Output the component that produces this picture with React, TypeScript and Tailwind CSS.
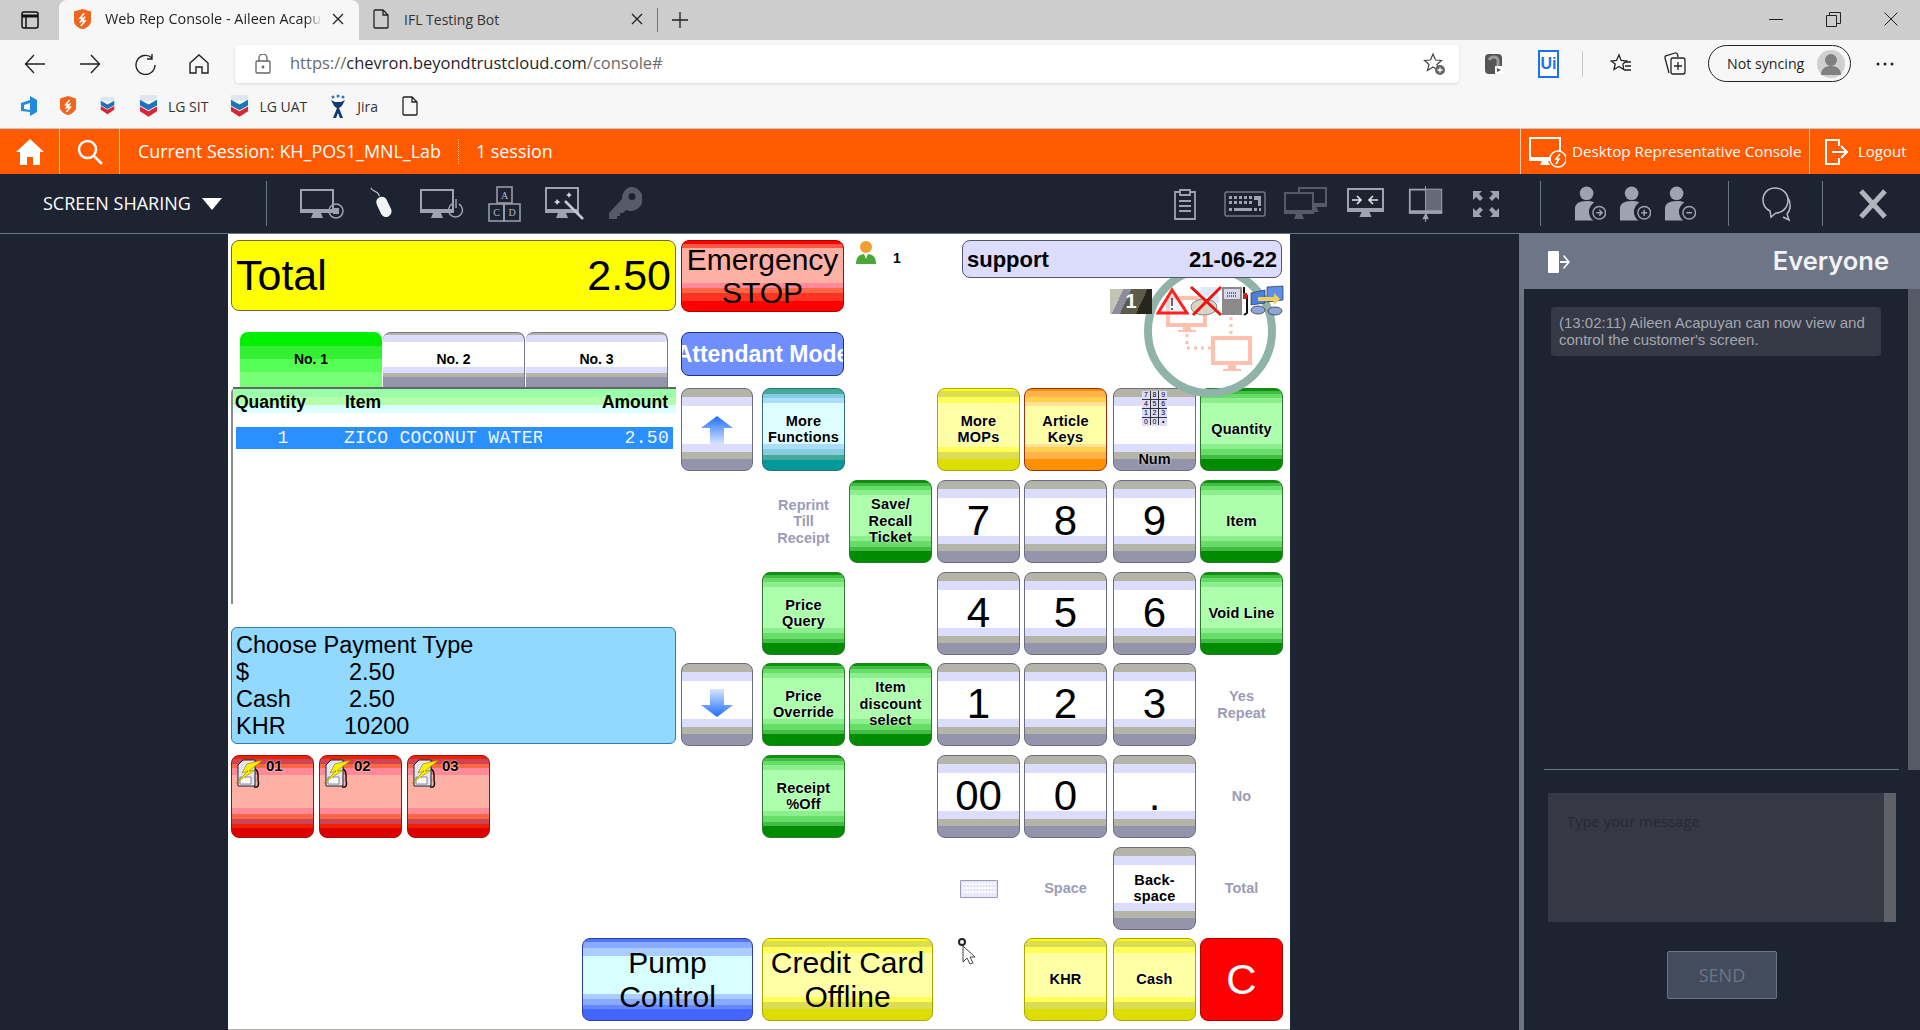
import type { ReactNode } from "react";

const sans = "font-['Liberation_Sans',Arial,sans-serif]";

// stripe skins of the POS keys, all hard stops
const skins = {
  gray: "border-[#6c6c80] bg-[linear-gradient(#b4b4a8_0_8px,#dcdcfc_8px_17px,#fff_17px_55px,#dcdcfc_55px_63px,#b4b4a8_63px_70px,#9494ac_70px)]",
  green: "border-[#2c7a2c] bg-[linear-gradient(#009900_0_2px,#44bb44_2px_5px,#66dd66_5px_9px,#8cee8c_9px_14px,#adffad_14px_55px,#8cee8c_55px_60px,#66dd66_60px_66px,#44bb44_66px_70px,#008c00_70px)]",
  orange: "border-[#99330f] bg-[linear-gradient(#ff9000_0_2px,#ffb24c_2px_8px,#ffd04c_8px_13px,#ffe099_13px_17px,#ffffa5_17px_55px,#ffe099_55px_58px,#ffd04c_58px_63px,#ffb24c_63px_70px,#ff9000_70px)]",
  yellow: "border-[#a8a800] bg-[linear-gradient(#ffff00_0_2px,#dddd55_2px_8px,#ffff55_8px_14px,#ffffa5_14px_58px,#ffff55_58px_63px,#dddd55_63px_70px,#dddd00_70px)]",
  teal: "border-[#2f6f78] bg-[linear-gradient(#44aa99_0_5px,#88ccdd_5px_9px,#aaddff_9px_14px,#ddffff_14px_55px,#aaddff_55px_60px,#88ccdd_60px_66px,#44aa99_66px_71px,#009999_71px)]",
  red: "border-[#b00000] bg-[#ff0000]",
  pump: "border-[#a01010] bg-[linear-gradient(#ee2200_0_3px,#cc4455_3px_8px,#ff6644_8px_12px,#ff8899_12px_19px,#ffb0a5_19px_52px,#ff8899_52px_58px,#ff6644_58px_63px,#cc4455_63px_68px,#ee2200_68px_72px,#dd0000_72px)]",
  blue: "border-[#2b3f9c] bg-[linear-gradient(#5577ff_0_3px,#88aaff_3px_9px,#aaccff_9px_17px,#d8ffff_17px_55px,#aaccff_55px_60px,#88aaff_60px_66px,#6688ff_66px_70px,#4466ff_70px)]",
};

function Key({ skin, pos, w = "w-[83px]", children, text = "label" }: { skin: keyof typeof skins; pos: string; w?: string; children?: ReactNode; text?: string }) {
  const size =
    text === "digit"
      ? "text-[42px] leading-none font-normal pb-[2px]"
      : text === "big"
        ? "text-[30px] leading-[34px] font-normal"
        : "text-[14.5px] leading-[16.5px] font-bold tracking-[0.2px] pb-[1px] [text-shadow:0_0_2px_#fff]";
  return (
    <div className={`${pos} ${w} h-[83px] ${skins[skin]} ${size} ${sans} border rounded-[8px] flex flex-col items-center justify-center text-center text-black overflow-hidden`}>
      {children}
    </div>
  );
}

function Ghost({ pos, children }: { pos: string; children: ReactNode }) {
  return (
    <div className={`${pos} w-[83px] h-[83px] ${sans} flex flex-col items-center justify-center text-center text-[14.5px] leading-[16.5px] font-bold text-[#9c9cb8]`}>
      {children}
    </div>
  );
}

function ArrowKey({ pos, down }: { pos: string; down?: boolean }) {
  return (
    <Key skin="gray" pos={pos} w="w-[72px]">
      <svg width="32" height="30" viewBox="0 0 32 30" className={down ? "rotate-180" : ""}>
        <defs>
          <linearGradient id={down ? "ad" : "au"} x1="0" y1="0" x2="0" y2="1">
            <stop offset="0" stopColor="#1f6dff" />
            <stop offset="1" stopColor="#d6e6ff" />
          </linearGradient>
        </defs>
        <path d="M16 2 32 14H23V30H9V14H0Z" fill={`url(#${down ? "ad" : "au"})`} />
      </svg>
    </Key>
  );
}

function PumpIcon() {
  return (
    <svg width="29" height="31" viewBox="0 0 29 31" className="shrink-0">
      <path d="M3 7 8 2h12v26H3Z" fill="#e4e4f4" stroke="#222" />
      <path d="M5 19h11v7H5Z" fill="#fff" stroke="#8888a0" />
      <path d="M20 11c4 2 3 6 3 10s2 6-1 8h-3" fill="none" stroke="#111" strokeWidth="1.5" />
      <path d="M28 2 12 6 7 15l6-2L1 25l19-13-6 1Z" fill="#ffee00" stroke="#8a7a00" strokeWidth=".6" />
    </svg>
  );
}

function PumpTile({ label }: { label: string }) {
  return (
    <div className={`w-[83px] h-[83px] ${skins.pump} border rounded-[8px] flex items-start pl-[3px] pt-[2px] gap-[2px]`}>
      <PumpIcon />
      <span className={`${sans} text-[15px] font-bold text-black leading-[16px] [text-shadow:0_0_2px_#fff]`}>{label}</span>
    </div>
  );
}

function Tab({ label, active }: { label: string; active?: boolean }) {
  return (
    <div
      className={`${sans} w-[142px] h-[55px] rounded-t-[8px] flex items-center justify-center pb-[1px] text-[14px] font-bold text-black ${
        active
          ? "bg-[linear-gradient(#00ee00_0_14px,#33f033_14px_27px,#55ff55_27px_40px,#77ff77_40px)]"
          : "border-t border-r border-[#77778a] bg-[linear-gradient(#b4b4a8_0_2px,#dcdcfc_2px_9px,#fff_9px_34px,#dcdcfc_34px_40px,#b4b4a8_40px_44px,#9494ac_44px)]"
      }`}
    >
      {label}
    </div>
  );
}

function LeftPanel() {
  return (
    <div className="col-start-1 row-start-1 row-span-7 w-[445px] flex flex-col">
      <div className={`${sans} h-[71px] shrink-0 rounded-[8px] border border-[#6b6b3c] bg-[#ffff00] flex items-center justify-between px-[4px] text-[43px] text-black`}>
        <span>Total</span>
        <span>2.50</span>
      </div>
      <div className="mt-[21px] pl-[9px] flex gap-[1px] shrink-0">
        <Tab label="No. 1" active />
        <Tab label="No. 2" />
        <Tab label="No. 3" />
      </div>
      <div className={`${sans} h-[217px] shrink-0 border-l-2 border-[#8c8c8c] rounded-tl-[6px] flex flex-col`}>
        <div className="h-[26px] border-t-2 border-[#666] flex items-center justify-between pl-[2px] pr-[8px] pt-[3px] bg-[linear-gradient(#99ffaa_0_8px,#b5ffaa_8px_16px,#ddffff_16px)] text-[17.5px] leading-none font-bold text-black">
          <span className="w-[110px] shrink-0">Quantity</span>
          <span className="flex-1">Item</span>
          <span>Amount</span>
        </div>
        <div className="mt-[14px] mx-[3px] h-[22px] bg-[#2b90ff] flex items-center text-[#eef5ff] font-['Liberation_Mono',monospace] text-[18px] tracking-[0.3px]">
          <span className="w-[108px] text-center pr-[14px]">1</span>
          <span className="w-[198px] overflow-hidden whitespace-nowrap">ZICO COCONUT WATER</span>
          <span className="flex-1 text-right pr-[4px]">2.50</span>
        </div>
      </div>
      <div className={`${sans} mt-[23px] h-[117px] shrink-0 rounded-[6px] border border-[#2f7f9f] bg-[#91d9ff] pl-[4px] pt-[4px] text-[23.5px] leading-[27px] text-black`}>
        <div>Choose Payment Type</div>
        <div className="grid grid-cols-[113px_1fr]">
          <span>$</span>
          <span>2.50</span>
          <span>Cash</span>
          <span>2.50</span>
          <span>KHR</span>
          <span className="ml-[-5px]">10200</span>
        </div>
      </div>
      <div className="mt-[11px] flex gap-[5px] shrink-0">
        <PumpTile label="01" />
        <PumpTile label="02" />
        <PumpTile label="03" />
      </div>
    </div>
  );
}

function StatusIcons() {
  return (
    <div className="relative z-10 flex justify-end items-center h-[30px] mt-[8px] mr-[-1px]">
      <div className={`${sans} w-[42px] h-[25px] mr-[4px] flex items-center justify-center text-[20px] font-bold text-white bg-[linear-gradient(115deg,#c4c4b4_0_25%,#8c8c9c_25%_40%,#5c5c48_40%_70%,#26261c_70%)]`}>
        1
      </div>
      <svg width="33" height="28" viewBox="0 0 33 28">
        <path d="M16 3 31 26H2Z" fill="#dfe6f6" fillOpacity=".5" stroke="#ff2020" strokeWidth="3" />
        <path d="M15 11h2v8h-2Zm0 10h2v2h-2Z" fill="#666" />
      </svg>
      <svg width="33" height="32" viewBox="0 0 33 32">
        <path d="M12 2h16l3 16H8Z" fill="#dfe8fa" />
        <ellipse cx="15" cy="22" rx="13" ry="8" fill="#d6d6c8" stroke="#888" />
        <path d="M2 2 32 30M32 2 4 30" stroke="#f01010" strokeWidth="3" />
      </svg>
      <svg width="28" height="32" viewBox="0 0 28 32">
        <path d="M0 2h20v28H0Z" fill="#8a8a8a" />
        <path d="M2 4h16v10H2Z" fill="#d8d8ec" />
        <path d="M5 8h10M5 11h10" stroke="#444" strokeWidth="1.5" strokeDasharray="1 1" />
        <path d="M22 2v6l3 3v17l-3 2" fill="none" stroke="#111" strokeWidth="2" />
        <path d="M21 8h4v6h-4Z" fill="#cc2222" />
      </svg>
      <svg width="34" height="32" viewBox="0 0 34 32">
        <path d="M1 8 15 5v13L1 20Z" fill="#4a7fe0" stroke="#234" strokeWidth=".7" />
        <path d="M17 2 33 1v14l-16 2Z" fill="#5c90ea" stroke="#234" strokeWidth=".7" />
        <path d="M8 12h16V8l6 6-6 6v-4H8Z" fill="#f0d060" />
        <ellipse cx="8" cy="25" rx="7" ry="4" fill="#8fa6d8" stroke="#224" strokeWidth=".7" />
        <ellipse cx="25" cy="26" rx="7" ry="4" fill="#8fa6d8" stroke="#224" strokeWidth=".7" />
      </svg>
    </div>
  );
}

function TopRight() {
  return (
    <div className="col-start-4 col-span-5 row-start-1 row-span-2 relative">
      <div className="flex items-start relative z-10">
        <svg width="20" height="24" viewBox="0 0 20 24" className="ml-[7px]">
          <circle cx="10" cy="7" r="6" fill="#f0a030" />
          <path d="M0 24c0-8 4-10 10-10s10 2 10 10Z" fill="#4aa838" />
          <path d="M8 14h4l-2 5Z" fill="#fff" />
        </svg>
        <span className={`${sans} ml-[17px] mt-[8px] text-[14px] font-bold text-black`}>1</span>
        <div className={`${sans} ml-auto mr-[1px] w-[320px] h-[38px] rounded-[8px] border border-[#55556a] bg-[#dcdcfc] flex items-center justify-between px-[4px] text-[22px] font-bold text-black`}>
          <span>support</span>
          <span>21-06-22</span>
        </div>
      </div>
      <StatusIcons />
      {/* recording badge that the remote session paints over the screen */}
      <svg width="134" height="134" viewBox="0 0 134 134" className="absolute left-[294px] top-[25px] pointer-events-none">
        <circle cx="67" cy="66" r="62" fill="none" stroke="#8fb3a6" strokeWidth="8" />
        <g fill="#fff" stroke="#ffc0b0" strokeWidth="4">
          <path d="M25 33h37v27H25Z" />
          <path d="M70 73h37v25H70Z" />
        </g>
        <path d="M40 62h8v3h5v2H35v-2h5ZM85 100h8v4h5v2H80v-2h5Z" fill="#ffc0b0" />
        <path d="M44 69v14h24M88 45v26" fill="none" stroke="#ffc0b0" strokeWidth="3" strokeDasharray="3 4" />
      </svg>
    </div>
  );
}

function PosScreen() {
  return (
    <div className="w-[1062px] h-full bg-white border-b border-[#b0b0a8] pl-[3px] pt-[6px]">
      <div className="grid grid-cols-[450px_81px_87px_88px_87px_89px_87px_83px] grid-rows-[92px_56px_92px_92px_91px_92px_92px_91px_83px]">
        <LeftPanel />
        <div className={`${sans} col-start-2 col-span-2 row-start-1 w-[163px] h-[72px] rounded-[8px] border border-[#b00000] flex flex-col items-center justify-center text-[30px] leading-[33px] text-black bg-[linear-gradient(#ff0000_0_3px,#ff5544_3px_7px,#ffb0a5_7px_42px,#ff8899_42px_47px,#ff6644_47px_52px,#ff3322_52px_60px,#ff0000_60px)]`}>
          <span>Emergency</span>
          <span>STOP</span>
        </div>
        <div className={`${sans} col-start-2 col-span-2 row-start-2 w-[163px] h-[44px] rounded-[8px] border border-[#23307a] bg-[#6f8fff] flex items-center justify-center overflow-hidden pt-[1px] text-[23px] font-bold text-white`}>
          <span className="shrink-0 whitespace-nowrap">Attendant Mode</span>
        </div>
        <TopRight />

        <ArrowKey pos="col-start-2 row-start-3" />
        <Key skin="teal" pos="col-start-3 row-start-3">More<br />Functions</Key>
        <Key skin="yellow" pos="col-start-5 row-start-3">More<br />MOPs</Key>
        <Key skin="orange" pos="col-start-6 row-start-3">Article<br />Keys</Key>
        <div className={`col-start-7 row-start-3 w-[83px] h-[83px] ${skins.gray} ${sans} border rounded-[8px] flex flex-col items-center text-[14.5px] font-bold text-black`}>
          <div className="grid grid-cols-3 gap-[1px] bg-[#333] w-[25px] h-[34px] mt-[2px] text-[7px] leading-[8px] text-center font-normal">
            {["7", "8", "9", "4", "5", "6", "1", "2", "3", "0", "0", "•"].map((n, i) => (
              <span key={i} className="bg-[#dcdcfc]">{n}</span>
            ))}
          </div>
          <span className="mt-auto mb-[-1px] [text-shadow:0_0_2px_#fff]">Num</span>
        </div>
        <Key skin="green" pos="col-start-8 row-start-3">Quantity</Key>

        <Ghost pos="col-start-3 row-start-4">Reprint<br />Till<br />Receipt</Ghost>
        <Key skin="green" pos="col-start-4 row-start-4">Save/<br />Recall<br />Ticket</Key>
        <Key skin="gray" text="digit" pos="col-start-5 row-start-4">7</Key>
        <Key skin="gray" text="digit" pos="col-start-6 row-start-4">8</Key>
        <Key skin="gray" text="digit" pos="col-start-7 row-start-4">9</Key>
        <Key skin="green" pos="col-start-8 row-start-4">Item</Key>

        <Key skin="green" pos="col-start-3 row-start-5">Price<br />Query</Key>
        <Key skin="gray" text="digit" pos="col-start-5 row-start-5">4</Key>
        <Key skin="gray" text="digit" pos="col-start-6 row-start-5">5</Key>
        <Key skin="gray" text="digit" pos="col-start-7 row-start-5">6</Key>
        <Key skin="green" pos="col-start-8 row-start-5">Void Line</Key>

        <ArrowKey pos="col-start-2 row-start-6" down />
        <Key skin="green" pos="col-start-3 row-start-6">Price<br />Override</Key>
        <Key skin="green" pos="col-start-4 row-start-6">Item<br />discount<br />select</Key>
        <Key skin="gray" text="digit" pos="col-start-5 row-start-6">1</Key>
        <Key skin="gray" text="digit" pos="col-start-6 row-start-6">2</Key>
        <Key skin="gray" text="digit" pos="col-start-7 row-start-6">3</Key>
        <Ghost pos="col-start-8 row-start-6">Yes<br />Repeat</Ghost>

        <Key skin="green" pos="col-start-3 row-start-7">Receipt<br />%Off</Key>
        <Key skin="gray" text="digit" pos="col-start-5 row-start-7">00</Key>
        <Key skin="gray" text="digit" pos="col-start-6 row-start-7">0</Key>
        <Key skin="gray" text="digit" pos="col-start-7 row-start-7">.</Key>
        <Ghost pos="col-start-8 row-start-7">No</Ghost>

        <Ghost pos="col-start-5 row-start-8">
          <svg width="38" height="18" viewBox="0 0 38 18">
            <path d="M.5.5h37v17H.5Z" fill="#e8e8fa" stroke="#9c9cb8" />
            <path d="M3 4h32M3 8h32M3 12h32" stroke="#fff" strokeWidth="2" strokeDasharray="2 1" />
          </svg>
        </Ghost>
        <Ghost pos="col-start-6 row-start-8">Space</Ghost>
        <Key skin="gray" pos="col-start-7 row-start-8">Back-<br />space</Key>
        <Ghost pos="col-start-8 row-start-8">Total</Ghost>

        <Key skin="blue" text="big" w="w-[171px] ml-[351px]" pos="col-start-1 col-span-2 row-start-9">Pump<br />Control</Key>
        <Key skin="yellow" text="big" w="w-[171px]" pos="col-start-3 col-span-2 row-start-9">Credit Card<br />Offline</Key>
        <div className="col-start-5 row-start-9 relative">
          <svg width="22" height="28" viewBox="0 0 22 28" className="absolute left-[20px] top-0">
            <circle cx="5" cy="4" r="3" fill="#fff" stroke="#222" strokeWidth="2" />
            <path d="M6 8v16l4-4 3 6 3-1-3-6h5Z" fill="#fff" stroke="#444" />
          </svg>
        </div>
        <Key skin="yellow" pos="col-start-6 row-start-9">KHR</Key>
        <Key skin="yellow" pos="col-start-7 row-start-9">Cash</Key>
        <div className={`col-start-8 row-start-9 w-[83px] h-[83px] ${skins.red} ${sans} border rounded-[8px] flex items-center justify-center text-[42px] text-white`}>C</div>
      </div>
    </div>
  );
}

function ChatPanel() {
  return (
    <div className="w-[401px] h-full flex flex-col border-l-[5px] border-[#6d7587] bg-[#1d2331]">
      <div className="h-[55px] shrink-0 bg-[#6d7587] flex items-center justify-between pl-[24px] pr-[31px] ml-[-1px]">
        <svg width="24" height="24" viewBox="0 0 24 24" fill="#fff">
          <path d="M2 1h9a1 1 0 0 1 1 1v20a1 1 0 0 1-1 1H2a1 1 0 0 1-1-1V2a1 1 0 0 1 1-1Z" />
          <path d="M13 11h7l-4-5 1-1 6 7-6 7-1-1 4-5h-7Z" />
        </svg>
        <span className="font-['Inter',sans-serif] text-[25.5px] font-semibold text-[#f2f3f5]">Everyone</span>
      </div>
      <div className="flex-1 flex min-h-0">
        <div className="flex-1 flex flex-col min-w-0">
          <div className="h-[481px] shrink-0 border-b border-[#6d7587] ml-[20px] mr-[9px] pt-[18px]">
            <div className={`${sans} ml-[7px] w-[330px] h-[49px] rounded-[4px] bg-[#363a46] px-[8px] py-[7px] text-[15px] leading-[17px] text-[#a3a7af]`}>
              (13:02:11) Aileen Acapuyan can now view and control the customer's screen.
            </div>
          </div>
          <div className="mt-[23px] ml-[24px] mr-[12px] h-[129px] shrink-0 bg-[#363944] flex">
            <span className="flex-1 pl-[19px] pt-[18px] font-['Open_Sans',sans-serif] text-[14.8px] leading-[20px] text-[#262a36]">Type your message</span>
            <div className="w-[12px] bg-[#5e6168]" />
          </div>
          <div className="mt-[29px] ml-[143px] w-[110px] h-[48px] rounded-[2px] border border-[#6d7587] bg-[#424c5c] flex items-center justify-center font-['Open_Sans',sans-serif] text-[18px] text-[#6d7587]">
            SEND
          </div>
        </div>
        <div className="w-[12px] h-[481px] bg-[#565a66] shrink-0" />
      </div>
    </div>
  );
}

const toolStroke = { fill: "none", stroke: "#9ea3af", strokeWidth: 2 };

function Monitor({ x = 0, y = 0, w = 32, h = 22, color = "#9ea3af" }: { x?: number; y?: number; w?: number; h?: number; color?: string }) {
  return (
    <g>
      <rect x={x + 1} y={y + 1} width={w} height={h} fill="none" stroke={color} strokeWidth="2" />
      <rect x={x} y={y + h - 2} width={w + 2} height="4" fill={color} />
      <path d={`M${x + w / 2 - 3} ${y + h + 2}h8l2 5h-12Z`} fill={color} />
    </g>
  );
}

function Toolbar() {
  return (
    <div className="h-[60px] shrink-0 bg-[#1d2331] border-b border-[#6d7587] flex items-center">
      <div className="w-[266px] h-full flex items-center pl-[43px] shrink-0">
        <span className="font-['Open_Sans',sans-serif] text-[18px] text-white whitespace-nowrap">SCREEN SHARING</span>
        <svg width="20" height="12" viewBox="0 0 20 12" className="ml-[11px]"><path d="M0 0h20L10 12Z" fill="#fff" /></svg>
      </div>
      <div className="w-px h-[45px] bg-[#6d7587]" />
      <div className="flex items-center ml-[33px] gap-[24px]">
        <svg width="44" height="30" viewBox="0 0 44 30">
          <Monitor />
          <circle cx="36" cy="22" r="7" {...toolStroke} strokeWidth="1.5" />
          <rect x="33" y="19" width="6" height="6" fill="#9ea3af" />
        </svg>
        <svg width="28" height="34" viewBox="0 0 28 40">
          <path d="M1 1c2 6 8 2 10 10" fill="none" stroke="#d0d3d9" strokeWidth="1.2" />
          <rect x="10" y="11" width="13" height="25" rx="6.5" transform="rotate(-25 16 24)" fill="#f2f3f5" />
        </svg>
        <svg width="44" height="30" viewBox="0 0 44 30">
          <Monitor />
          <path d="M32 15a7 7 0 1 0 7 0M36 10v9" {...toolStroke} strokeWidth="1.5" />
        </svg>
        <svg width="33" height="36" viewBox="0 0 33 36" fontFamily="Liberation Serif" fontSize="10" fill="#b4b8c2" textAnchor="middle">
          <g fill="none" stroke="#9ea3af" strokeWidth="1.5">
            <rect x="9" y="1" width="15" height="16" />
            <rect x="1" y="18" width="15" height="17" />
            <rect x="16" y="18" width="16" height="17" />
          </g>
          <text x="16.5" y="13">A</text>
          <text x="8.5" y="30">C</text>
          <text x="24" y="30">D</text>
        </svg>
        <svg width="40" height="34" viewBox="0 0 40 34">
          <Monitor h={24} />
          <path d="M20 14 38 32" stroke="#c6c9d0" strokeWidth="2.5" />
          <path d="M12 12l1.500 2 2 1-2 1-1.500 2-1-2-2-1 2-1ZM24 5l1 2 2 1-2 1-1 2-1-2-2-1 2-1Z" fill="#d6d9df" />
        </svg>
        <svg width="33" height="33" viewBox="0 0 33 33" fill="#555b69">
          <path d="M21 0a12 12 0 1 1-4 23l-3 3h-3v3H8v3H0v-6l13-14A12 12 0 0 1 21 0Zm2 6a3.500 3.500 0 1 0 0 7 3.500 3.500 0 0 0 0-7Z" fillRule="evenodd" />
        </svg>
      </div>
      <div className="flex items-center ml-auto">
        <svg width="24" height="32" viewBox="0 0 24 32" className="mr-[27px]" fill="none" stroke="#9ea3af" strokeWidth="1.8">
          <path d="M7 4H2v27h20V4h-5" />
          <path d="M7 2h10v5H7ZM6 13h12M6 18h12M6 23h12" />
        </svg>
        <svg width="42" height="26" viewBox="0 0 42 26" className="mr-[18px]" fill="#9ea3af">
          <rect x="1" y="1" width="40" height="24" rx="1" fill="none" stroke="#9ea3af" />
          <path d="M5 5h3v3H5Zm5 0h3v3h-3Zm5 0h3v3h-3Zm5 0h3v3h-3Zm5 0h3v3h-3Zm5 0h7v10h-3V9h-4ZM5 10h3v3H5Zm5 0h3v3h-3Zm5 0h3v3h-3Zm5 0h3v3h-3Zm5 0h3v3h-3ZM5 17h3v3H5Zm5 0h18v3H10Zm20 0h3v3h-3Zm5 0h2v3h-2Z" />
        </svg>
        <svg width="44" height="34" viewBox="0 0 44 34" className="mr-[19px]">
          <Monitor x={14} y={0} w={27} h={18} color="#555b69" />
          <rect x="1" y="6" width="28" height="19" fill="#1d2331" stroke="#555b69" strokeWidth="2" />
          <rect x="0" y="23" width="30" height="4" fill="#555b69" />
          <path d="M12 27h6l2 5H10Z" fill="#555b69" />
        </svg>
        <svg width="38" height="32" viewBox="0 0 38 32" className="mr-[22px]">
          <Monitor w={35} />
          <path d="M5 12h9m-4-4 4 4-4 4M31 12h-9m4-4-4 4 4 4" fill="none" stroke="#e3e5e9" strokeWidth="1.6" />
        </svg>
        <svg width="38" height="36" viewBox="0 0 38 40" className="mr-[27px]">
          <rect x="1" y="4" width="35" height="25" fill="none" stroke="#9ea3af" strokeWidth="2" />
          <rect x="18" y="4" width="18" height="25" fill="#646a78" />
          <rect x="0" y="27" width="37" height="4" fill="#9ea3af" />
          <path d="M15 37h7l-3-8Z" fill="#9ea3af" />
          <path d="M18.500 0v40" stroke="#9ea3af" />
        </svg>
        <svg width="28" height="28" viewBox="0 0 28 28" className="mr-[40px]" fill="#9ea3af">
          <path d="M1 1h9L7 4l4 4-3 3-4-4-3 3ZM27 1v9l-3-3-4 4-3-3 4-4-3-3ZM1 27v-9l3 3 4-4 3 3-4 4 3 3ZM27 27h-9l3-3-4-4 3-3 4 4 3-3Z" />
        </svg>
        <div className="w-px h-[45px] bg-[#6d7587] mr-[33px]" />
        {["M23 28h6m-3-3 3 3-3 3", "M23 28h6m-3-3v6", "M23 28h6"].map((d, i) => (
          <svg key={i} width="32" height="38" viewBox="0 0 33 38" className="mr-[13px]">
            <circle cx="13" cy="8" r="7" fill="#9ea3af" />
            <path d="M1 36V24c0-5 4-8 12-8 3 0 6 .5 8 1.500a11 11 0 0 0-1 18.500Z" fill="#9ea3af" />
            <circle cx="26" cy="28" r="6.500" fill="#1d2331" stroke="#9ea3af" strokeWidth="1.500" />
            <path d={d} fill="none" stroke="#9ea3af" strokeWidth="1.600" />
          </svg>
        ))}
        <div className="w-px h-[45px] bg-[#6d7587] ml-[19px] mr-[33px]" />
        <svg width="30" height="36" viewBox="0 0 30 36" fill="none" stroke="#b6bac3" strokeWidth="1.500">
          <path d="M13 2C6 2 1 7 1 14c0 5 3 9 7 11l1 6 5-4c7 0 12-6 12-13S20 2 13 2Z" />
          <path d="M26 12c3 4 3 12-1 16l2 6-6-3" />
        </svg>
        <div className="w-px h-[45px] bg-[#6d7587] ml-[30px] mr-[36px]" />
        <svg width="28" height="30" viewBox="0 0 28 30" className="mr-[33px]">
          <path d="M2 2 26 28M26 2 2 28" stroke="#b0b4bd" strokeWidth="5" />
        </svg>
      </div>
    </div>
  );
}

function OrangeBar() {
  return (
    <div className="h-[45px] shrink-0 bg-[#ff5a00] flex items-stretch font-['Open_Sans',sans-serif] text-white">
      <div className="w-[60px] border-r border-[#ffc9a8] flex items-center justify-center">
        <svg width="30" height="28" viewBox="0 0 30 28" fill="#fff"><path d="M15 1 29 14h-4v13h-7v-8h-6v8H5V14H1Z" /></svg>
      </div>
      <div className="w-[60px] border-r border-[#ffc9a8] flex items-center justify-center">
        <svg width="26" height="26" viewBox="0 0 26 26" fill="none" stroke="#fff" strokeWidth="2.500"><circle cx="10.500" cy="10.500" r="8.500" /><path d="m16 16 9 9" /></svg>
      </div>
      <span className="self-center ml-[18px] text-[17.9px] whitespace-nowrap">Current Session: KH_POS1_MNL_Lab</span>
      <div className="self-center h-[25px] ml-[17px] border-l border-dotted border-[#ffc9a8]" />
      <span className="self-center ml-[17px] text-[17.9px]">1 session</span>
      <div className="ml-auto flex items-stretch">
        <div className="w-[290px] border-l border-r border-[#ffc9a8] flex items-center pl-[8px] gap-[6px]">
          <svg width="37" height="32" viewBox="0 0 37 32">
            <rect x="1" y="2" width="30" height="21" fill="none" stroke="#fff" strokeWidth="2" />
            <rect x="0" y="21" width="32" height="4" fill="#fff" />
            <path d="M13 25h6l2 4H11Z" fill="#fff" />
            <circle cx="29" cy="23" r="8" fill="#ff5a00" stroke="#fff" strokeWidth="1.500" />
            <path d="M31 18l-4 5h3l-3 5" fill="none" stroke="#fff" strokeWidth="1.500" />
          </svg>
          <span className="text-[15.2px] whitespace-nowrap">Desktop Representative Console</span>
        </div>
        <div className="w-[110px] flex items-center pl-[15px] gap-[9px]">
          <svg width="24" height="26" viewBox="0 0 24 26" fill="none" stroke="#fff" strokeWidth="2">
            <path d="M14 7V1H1v24h13v-6M7 13h15m-6-6 6 6-6 6" />
          </svg>
          <span className="text-[15px]">Logout</span>
        </div>
      </div>
    </div>
  );
}

function ChevronLogo({ size = 16 }: { size?: number }) {
  return (
    <svg width={size} height={size * 1.15} viewBox="0 0 20 23">
      <path d="M1 0h18v6H1Z" fill="#dfe6ee" />
      <path d="M1 5 10 10l9-5v6l-9 5-9-5Z" fill="#1e74b8" />
      <path d="M1 12 10 17l9-5v5l-9 6-9-6Z" fill="#d6263a" />
    </svg>
  );
}

function ShieldLogo({ size = 17 }: { size?: number }) {
  return (
    <svg width={size} height={size * 1.2} viewBox="0 0 20 24" className="shrink-0">
      <path d="M10 0 20 3v11c0 5-5 8-10 10C5 22 0 19 0 14V3Z" fill="#f0641e" />
      <path d="M12 5 7 11h3l-3 5M13 9l-3 5h3l-5 6" fill="none" stroke="#fff" strokeWidth="1.800" />
    </svg>
  );
}

function FileIcon() {
  return (
    <svg width="16" height="20" viewBox="0 0 16 20" fill="none" stroke="#222" strokeWidth="1.300">
      <path d="M2 1h8l5 5v12a1 1 0 0 1-1 1H2a1 1 0 0 1-1-1V2a1 1 0 0 1 1-1ZM10 1v5h5" />
    </svg>
  );
}

function BrowserChrome() {
  const ui = "font-['Open_Sans',sans-serif]";
  return (
    <div className={`${ui} shrink-0 text-[#1f1f1f]`}>
      <div className="h-[40px] bg-[#cdcdcd] flex items-end relative">
        <svg width="18" height="18" viewBox="0 0 18 18" className="absolute left-[21px] top-[11px]" fill="none" stroke="#111" strokeWidth="1.500">
          <rect x="1" y="1" width="16" height="16" rx="2" />
          <path d="M1 5h16" strokeWidth="3" />
          <path d="M5 5v12" />
        </svg>
        <div className="ml-[59px] w-[300px] h-[40px] rounded-t-[8px] bg-[#f7f7f7] flex items-center pl-[15px] pr-[15px] pb-[2px]">
          <ShieldLogo />
          <span className="ml-[14px] flex-1 text-[14.4px] whitespace-nowrap overflow-hidden [mask-image:linear-gradient(to_left,transparent,black_16px)]">Web Rep Console - Aileen Acapuyan</span>
          <svg width="12" height="12" viewBox="0 0 12 12" stroke="#222" strokeWidth="1.300" className="ml-[10px] shrink-0"><path d="M1 1l10 10M11 1 1 11" /></svg>
        </div>
        <div className="w-[298px] h-[40px] flex items-center pl-[14px] pr-[14px] pb-[2px]">
          <FileIcon />
          <span className="ml-[15px] flex-1 text-[14px] text-[#333]">IFL Testing Bot</span>
          <svg width="12" height="12" viewBox="0 0 12 12" stroke="#222" strokeWidth="1.300"><path d="M1 1l10 10M11 1 1 11" /></svg>
        </div>
        <div className="w-px h-[24px] bg-[#777] mb-[8px]" />
        <svg width="18" height="18" viewBox="0 0 18 18" stroke="#222" strokeWidth="1.300" className="ml-[13px] mb-[11px]"><path d="M9 1v16M1 9h16" /></svg>
        <div className="ml-auto flex items-center h-[40px] pr-[22px] gap-[43px] pb-[2px]">
          <div className="w-[14px] h-px bg-[#222]" />
          <svg width="15" height="15" viewBox="0 0 15 15" fill="none" stroke="#222"><path d="M.5 3.500h10v11H.5ZM3.500 3.500v-3h11v11h-4" /></svg>
          <svg width="14" height="14" viewBox="0 0 14 14" stroke="#222"><path d="M.5.500l13 13M13.500.500l-13 13" /></svg>
        </div>
      </div>
      <div className="h-[48px] bg-[#f7f7f7] flex items-center pb-[1px]">
        <div className="flex items-center pl-[24px] gap-[33px] w-[235px]">
          <svg width="22" height="20" viewBox="0 0 22 20" fill="none" stroke="#222" strokeWidth="1.400"><path d="M21 10H1.500M10 1 1.500 10l8.500 9" /></svg>
          <svg width="22" height="20" viewBox="0 0 22 20" fill="none" stroke="#222" strokeWidth="1.400"><path d="M1 10h19.500M12 1l8.500 9-8.500 9" /></svg>
          <svg width="22" height="22" viewBox="0 0 22 22" fill="none" stroke="#222" strokeWidth="1.400"><path d="M18 5a9.500 9.500 0 1 0 3 7M18 1v5h-5" /></svg>
          <svg width="20" height="20" viewBox="0 0 20 20" fill="none" stroke="#222" strokeWidth="1.400"><path d="M1 9 10 1l9 8v10h-6v-6H7v6H1Z" /></svg>
        </div>
        <div className="w-[1224px] h-[38px] bg-white rounded-[4px] shadow-[0_1px_3px_rgba(0,0,0,0.12)] flex items-center pl-[20px] pr-[12px]">
          <svg width="16" height="20" viewBox="0 0 16 20" fill="none" stroke="#666" strokeWidth="1.300"><rect x="1" y="7" width="14" height="12" rx="1" /><path d="M4 7V4a4 4 0 0 1 8 0v3" /><circle cx="8" cy="13" r=".8" fill="#666" /></svg>
          <span className="ml-[19px] flex-1 text-[16.5px] text-[#6b6b6b]">https://<span className="text-[#1f1f1f]">chevron.beyondtrustcloud.com</span>/console#</span>
          <svg width="24" height="24" viewBox="0 0 24 24"><path d="M10 2l2.500 6 6 .5-4.500 4 1.500 6-5.500-3.500L4.500 18.500 6 12.500l-4.500-4 6-.5Z" fill="none" stroke="#444" strokeWidth="1.200" /><circle cx="17" cy="18" r="5" fill="#666" /><path d="M17 15.500v5M14.500 18h5" stroke="#fff" strokeWidth="1.300" /></svg>
        </div>
        <div className="w-[25px]" />
        <svg width="20" height="24" viewBox="0 0 20 24"><rect x="1" y="2" width="17" height="20" rx="4" fill="#555" /><path d="M5 8c2-4 8-4 9 0v9" fill="none" stroke="#999" strokeWidth="3" /><rect x="11" y="14" width="8" height="8" fill="#fff" /><path d="M13 16l4 2-4 2Z" fill="#555" /></svg>
        <div className={`${sans} ml-[34px] w-[21px] h-[28px] border-2 border-[#1a73e8] bg-white flex items-center justify-center text-[16px] font-bold text-[#1a73e8]`}>Ui</div>
        <div className="ml-[23px] w-px h-[26px] bg-[#c8c8c8]" />
        <svg width="22" height="24" viewBox="0 0 22 24" className="ml-[27px]" fill="none" stroke="#222" strokeWidth="1.300"><path d="M9 3l2.200 5.500 5.300.500-3.600 3 .8 5.500-4.700-3-5 3 1.200-5.500L1 9l5.500-.5ZM15 10h6M15 14h6M14 18h7" /></svg>
        <svg width="22" height="26" viewBox="0 0 22 26" className="ml-[32px]" fill="none" stroke="#222" strokeWidth="1.300"><path d="M5 22 1 7a2 2 0 0 1 1.500-2.500L11 2a2 2 0 0 1 2.500 1.500L14 6" /><rect x="7" y="7" width="14" height="16" rx="2" /><path d="M14 11v8M10 15h8" /></svg>
        <div className="ml-[22px] w-[143px] h-[37px] rounded-full border border-[#222] flex items-center pl-[18px] pr-[5px] justify-between">
          <span className="text-[14.2px] whitespace-nowrap">Not syncing</span>
          <svg width="28" height="28" viewBox="0 0 28 28"><circle cx="14" cy="14" r="14" fill="#d0d0d0" /><circle cx="14" cy="10" r="6" fill="#808080" /><path d="M4 25c0-7 5-9 10-9s10 2 10 9Z" fill="#808080" /></svg>
        </div>
        <svg width="18" height="4" viewBox="0 0 18 4" className="ml-[25px]" fill="#222"><circle cx="2" cy="2" r="1.500" /><circle cx="9" cy="2" r="1.500" /><circle cx="16" cy="2" r="1.500" /></svg>
      </div>
      <div className="h-[41px] bg-[#f7f7f7] border-b border-[#c8c8c8] flex items-center text-[14px] text-[#333] pl-[18px] pb-[4px]">
        <svg width="20" height="22" viewBox="0 0 20 22"><path d="M12 1v4L3 8v8l9 1v4l7-4V5Z" fill="#1f8ae0" /><path d="M6 10l6-2v7l-6-1Z" fill="#f7f7f7" /></svg>
        <div className="ml-[22px]"><ShieldLogo size={16} /></div>
        <div className="ml-[24px]"><ChevronLogo size={15} /></div>
        <div className="ml-[24px]"><ChevronLogo size={19} /></div>
        <span className="ml-[10px]">LG SIT</span>
        <div className="ml-[22px]"><ChevronLogo size={19} /></div>
        <span className="ml-[10px]">LG UAT</span>
        <svg width="18" height="26" viewBox="0 0 18 26" className="ml-[22px]"><path d="M2 7c3 6 4 8 7 8s4-2 7-8l-4 2H6ZM4 25l4-10h2l4 10h-3l-2-5-2 5Z" fill="#123a72" /><circle cx="9" cy="3" r="1.500" fill="#2a75d0" /><circle cx="4" cy="4" r="1.500" fill="#2a75d0" /><circle cx="14" cy="4" r="1.500" fill="#2a75d0" /></svg>
        <span className="ml-[10px]">Jira</span>
        <div className="ml-[24px]"><FileIcon /></div>
      </div>
    </div>
  );
}

export default function App() {
  return (
    <div className="w-[1920px] h-[1030px] overflow-hidden flex flex-col bg-[#1d2331]">
      <BrowserChrome />
      <OrangeBar />
      <Toolbar />
      <div className="flex-1 flex min-h-0">
        <div className="w-[228px] shrink-0" />
        <PosScreen />
        <div className="flex-1" />
        <ChatPanel />
      </div>
    </div>
  );
}
